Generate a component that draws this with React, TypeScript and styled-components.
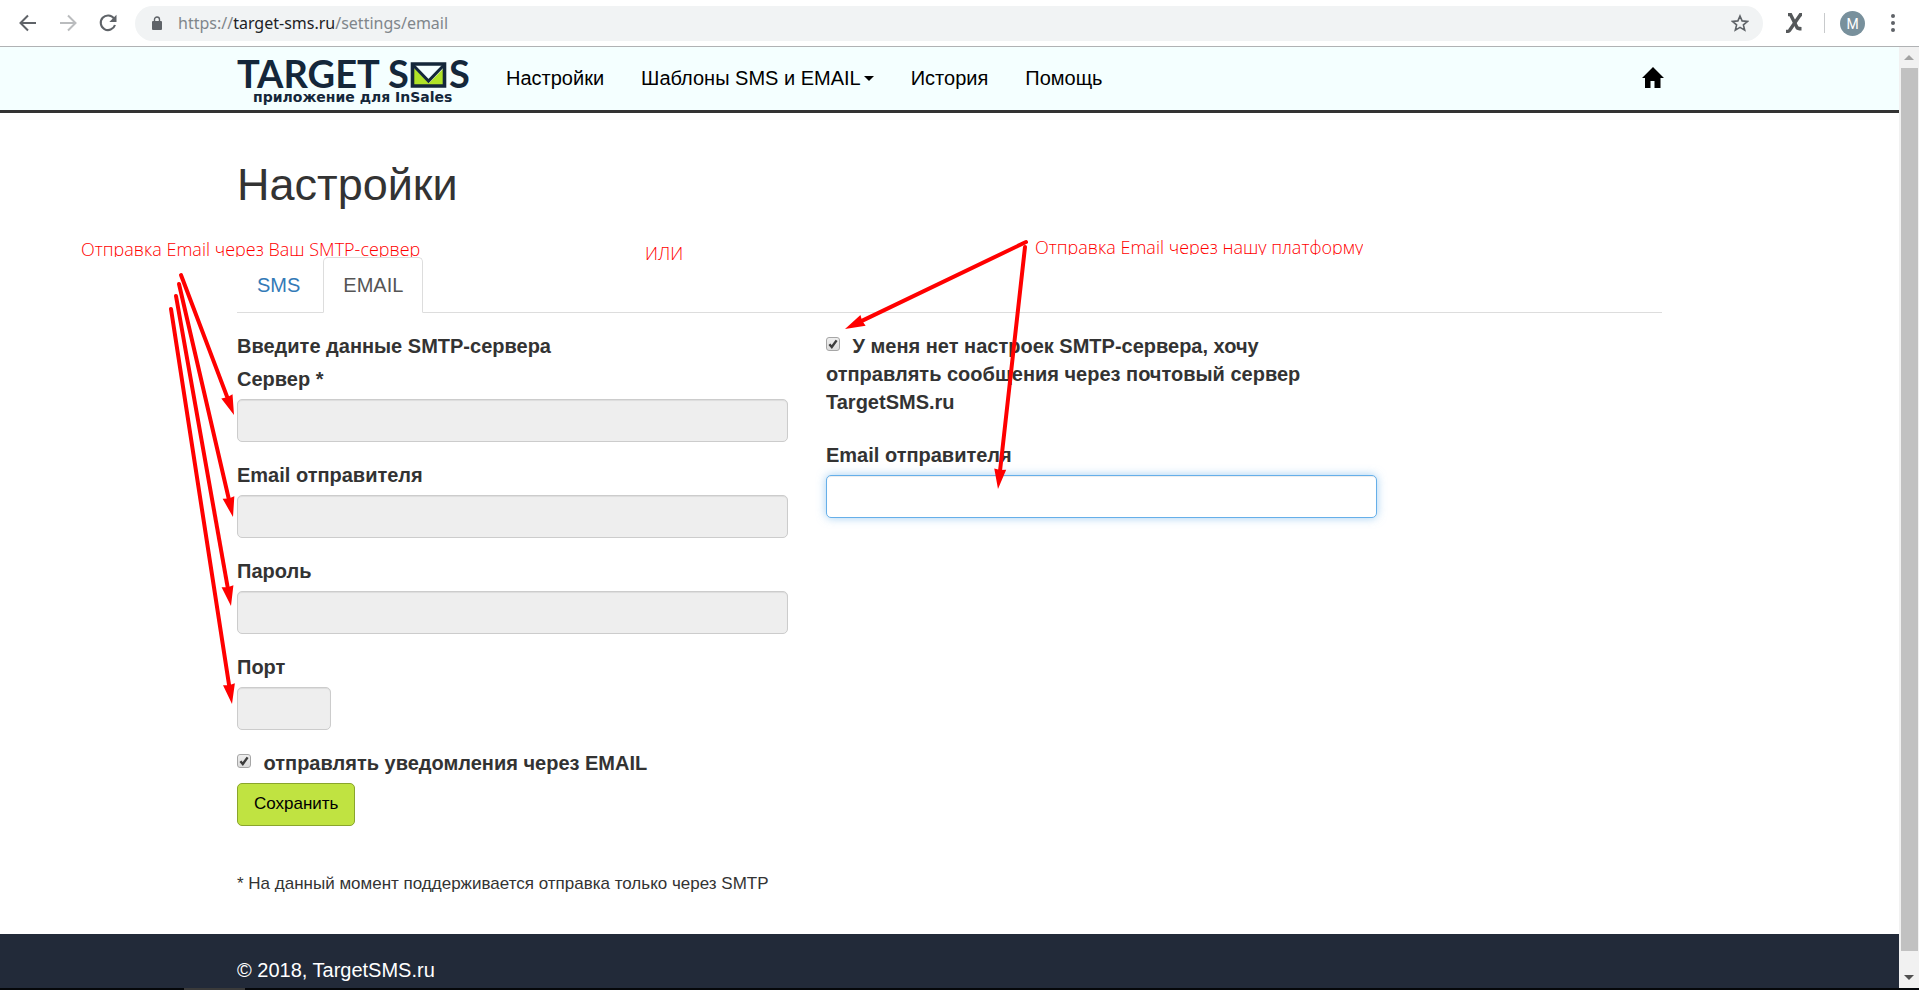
import React from "react";
import styled, { createGlobalStyle, css } from "styled-components";

const GlobalStyle = createGlobalStyle`
  *, *::before, *::after { box-sizing: border-box; }
  body {
    margin: 0;
    background: #fff;
    color: #333;
    font-family: "Liberation Sans", Arial, sans-serif;
    font-size: 20px;
    line-height: 28px;
  }
`;

const Browser = styled.div`
  display: flex;
  flex-direction: column;
  height: 100vh;
  overflow: hidden;
`;

const Toolbar = styled.div`
  display: flex;
  flex: none;
  align-items: center;
  height: 47px;
  padding: 0 24px 0 18px;
  border-bottom: 1px solid #b0b2b4;
  background: #fff;
`;

const ToolButtons = styled.div`
  display: flex;
  gap: 20px;
  padding-right: 17px;
`;

const ToolButton = styled.button`
  display: flex;
  align-items: center;
  justify-content: center;
  width: 20px;
  height: 20px;
  padding: 0;
  border: 0;
  background: none;
  color: #5f6368;
  &:disabled { color: #babcbe; }
`;

const AddressBar = styled.div`
  display: flex;
  flex: 1;
  align-items: center;
  height: 35px;
  padding: 0 14px 0 16px;
  border-radius: 18px;
  background: #f1f3f4;
  color: #80868b;
  font: 16px/24px "Noto Sans", sans-serif;
`;

const Url = styled.span`
  flex: 1;
  padding-left: 15px;
  b { color: #202124; font-weight: 400; }
`;

const ToolbarEnd = styled.div`
  display: flex;
  align-items: center;
  padding-left: 22px;
`;

const Extension = styled.span`
  display: flex;
  width: 18px;
  color: #55585a;
`;

const Divider = styled.span`
  width: 1px;
  height: 20px;
  margin: 0 15px 0 21px;
  background: #c8cacc;
`;

const Avatar = styled.span`
  width: 25px;
  height: 25px;
  margin-right: 26px;
  border-radius: 50%;
  background: #78909c;
  color: #fff;
  font: 14px/26px Roboto, sans-serif;
  text-align: center;
`;

const Viewport = styled.div`
  display: flex;
  flex: 1;
  min-height: 0;
`;

const Page = styled.div`
  display: flex;
  flex: 1;
  flex-direction: column;
  min-width: 0;
  overflow: hidden;
`;

const Scrollbar = styled.div`
  display: flex;
  flex: none;
  flex-direction: column;
  align-items: center;
  width: 20px;
  background: #f1f1f1;
`;

const ScrollArrow = styled.span<{ $down?: boolean }>`
  display: flex;
  flex: none;
  align-items: center;
  justify-content: center;
  height: 21px;
  &::before {
    content: "";
    border: 5px solid transparent;
    ${(p) =>
      p.$down
        ? css`border-top-color: #505050; border-bottom-width: 0;`
        : css`border-bottom-color: #a3a3a3; border-top-width: 0;`}
  }
`;

const ScrollThumb = styled.span`
  width: 17px;
  flex: 1;
  margin-bottom: 16px;
  background: #c1c1c1;
`;

const Container = styled.div`
  position: relative;
  width: 100%;
  max-width: 1463px;
  margin: 0 auto;
  padding: 0 19px;
`;

const NavBar = styled.header`
  flex: none;
  border-bottom: 3px solid #333;
  background: #f4ffff;
`;

const NavRow = styled(Container)`
  display: flex;
  align-items: center;
  height: 63px;
  padding-bottom: 1px;
`;

const Logo = styled.a`
  display: block;
  width: 232px;
  height: 54px;
  margin-right: 37px;
`;

const NavLinks = styled.nav`
  display: flex;
  flex: 1;
  gap: 37px;
`;

const NavLink = styled.a<{ $menu?: boolean }>`
  color: #000;
  text-decoration: none;
  ${(p) =>
    p.$menu &&
    css`
      display: flex;
      align-items: center;
      gap: 3px;
      &::after {
        content: "";
        border: 5px solid transparent;
        border-top-color: #000;
        border-bottom-width: 0;
      }
    `}
`;

const HomeLink = styled.a`
  display: block;
  height: 22px;
  margin-right: -2px;
  color: #000;
`;

const Title = styled.h1`
  margin: 0;
  padding: 47px 0;
  font-size: 45px;
  line-height: 50px;
  font-weight: 400;
`;

const Tabs = styled.div`
  display: flex;
  gap: 3px;
  border-bottom: 1px solid #ddd;
`;

const Tab = styled.a<{ $active?: boolean }>`
  height: 56px;
  margin-bottom: -1px;
  padding: 13px 19px;
  border: 1px solid transparent;
  border-radius: 5px 5px 0 0;
  color: #337ab7;
  text-decoration: none;
  ${(p) =>
    p.$active &&
    css`
      border-color: #ddd;
      border-bottom-color: #fff;
      background: #fff;
      color: #555;
    `}
`;

const Form = styled.form`
  display: grid;
  grid-template-columns: 551px 551px;
  gap: 38px;
  padding-top: 19px;
`;

const Column = styled.div`
  display: flex;
  flex-direction: column;
  align-items: flex-start;
`;

const Legend = styled.strong`
  margin-bottom: 5px;
`;

const Field = styled.label`
  display: flex;
  flex-direction: column;
  align-self: stretch;
  gap: 6px;
  margin-bottom: 19px;
  font-weight: 700;
`;

const TextInput = styled.input<{ $short?: boolean; $focused?: boolean }>`
  width: ${(p) => (p.$short ? "94px" : "100%")};
  height: 43px;
  padding: 7px 15px;
  border: 1px solid ${(p) => (p.$focused ? "#66afe9" : "#ccc")};
  border-radius: 5px;
  outline: 0;
  background: #fff;
  font: inherit;
  box-shadow: inset 0 1px 1px rgba(0, 0, 0, 0.075)
    ${(p) => p.$focused && ", 0 0 10px rgba(102, 175, 233, 0.6)"};
  &:disabled { background: #eee; }
`;

const CheckLabel = styled.label<{ $spaced?: boolean }>`
  margin-bottom: ${(p) => (p.$spaced ? "25px" : "6px")};
  font-weight: 700;
`;

const TickBox = styled.span`
  display: inline-block;
  position: relative;
  width: 14px;
  height: 14px;
  margin-right: 7px;
  vertical-align: 2px;
  input {
    display: block;
    width: 14px;
    height: 14px;
    margin: 0;
    appearance: none;
    border: 1px solid #a6a6a6;
    border-radius: 3px;
    background: linear-gradient(#eee, #dcdcdc);
  }
  svg {
    position: absolute;
    inset: 0;
    display: none;
    pointer-events: none;
  }
  input:checked + svg { display: block; }
`;

const SaveButton = styled.button`
  height: 43px;
  padding: 0 16px 2px;
  border: 1px solid #8aa52c;
  border-radius: 5px;
  background: #c0e341;
  color: #000;
  font: 17px/24px "Liberation Sans", Arial, sans-serif;
`;

const Note = styled.p`
  margin: 0;
  padding: 46px 0 38px;
  font-size: 17px;
  line-height: 24px;
`;

const Footer = styled.footer`
  flex: 1;
  padding-top: 22px;
  background: #222a39;
  color: #fff;
`;

const Taskbar = styled.div`
  flex: none;
  height: 2px;
  padding-left: 184px;
  background: #05070a;
  &::before {
    content: "";
    display: block;
    width: 61px;
    height: 2px;
    background: #3a3a3a;
  }
`;

const Arrows = styled.svg`
  position: absolute;
  top: 0;
  left: 0;
  overflow: visible;
  pointer-events: none;
`;

const Remark = styled.span<{ $x: number; $y: number }>`
  position: absolute;
  left: ${(p) => p.$x}px;
  top: ${(p) => p.$y}px;
  height: 17px;
  overflow: hidden;
  color: #f00;
  font: 300 18px/18px "Open Sans", sans-serif;
  white-space: nowrap;
`;

function Check({ id, children, spaced }: { id: string; children: React.ReactNode; spaced?: boolean }) {
  return (
    <CheckLabel htmlFor={id} $spaced={spaced}>
      <TickBox>
        <input id={id} type="checkbox" defaultChecked />
        <svg width="14" height="14" viewBox="0 0 14 14">
          <path d="M3.4 7.2 5.8 10 10.6 3.4" fill="none" stroke="#3c3c3c" strokeWidth="2.4" />
        </svg>
      </TickBox>{" "}
      {children}
    </CheckLabel>
  );
}

const arrowLines = [
  [-37, 162, 16, 302],
  [-39, 171, 15, 404],
  [-42, 183, 13, 493],
  [-47, 196, 14, 591],
  [808, 129, 627, 216],
  [807, 134, 780, 376],
];

function Arrow({ line }: { line: number[] }) {
  const [x1, y1, x2, y2] = line;
  const length = Math.hypot(x2 - x1, y2 - y1);
  const angle = (Math.atan2(y2 - y1, x2 - x1) * 180) / Math.PI;
  return (
    <g transform={`translate(${x1} ${y1}) rotate(${angle})`} fill="#f00" stroke="#f00">
      <path d={`M0 0H${length - 17}`} strokeWidth="4" strokeLinecap="round" />
      <path d={`M${length} 0l-20 -6 1 6 -1 6z`} stroke="none" />
    </g>
  );
}

export default function App() {
  return (
    <Browser>
      <GlobalStyle />
      <Toolbar>
        <ToolButtons>
          <ToolButton aria-label="Назад">
            <svg width="20" height="20" viewBox="0 0 20 20" fill="none" stroke="currentColor" strokeWidth="2">
              <path d="M18 10H3M10 2.500 2.500 10l7.500 7.500" />
            </svg>
          </ToolButton>
          <ToolButton aria-label="Вперёд" disabled>
            <svg width="20" height="20" viewBox="0 0 20 20" fill="none" stroke="currentColor" strokeWidth="2">
              <path d="M2 10h15M10 2.500 17.500 10 10 17.500" />
            </svg>
          </ToolButton>
          <ToolButton aria-label="Обновить">
            <svg width="20" height="20" viewBox="0 0 20 20">
              <path d="M16 5.500A7.300 7.300 0 1 0 17 12" fill="none" stroke="currentColor" strokeWidth="2.100" />
              <path d="M18.500 1.800V9H11.300z" fill="currentColor" />
            </svg>
          </ToolButton>
        </ToolButtons>
        <AddressBar>
          <svg width="12" height="15" viewBox="0 0 12 15">
            <rect x="1" y="5" width="10" height="9" rx="1" fill="#5f6368" />
            <path d="M3.500 6V3.500a2.500 2.500 0 0 1 5 0V6" fill="none" stroke="#5f6368" strokeWidth="1.400" />
          </svg>
          <Url>https://<b>target-sms.ru</b>/settings/email</Url>
          <svg width="18" height="18" viewBox="0 0 18 18" fill="none" stroke="#5f6368" strokeWidth="1.600">
            <path d="M9 2l2.100 4.900 5.400.5-4.100 3.500 1.300 5.300L9 13.400l-4.700 2.800 1.300-5.300L1.500 7.400l5.400-.5z" />
          </svg>
        </AddressBar>
        <ToolbarEnd>
          <Extension>
            <svg width="18" height="20" viewBox="0 0 18 20" fill="none" stroke="currentColor" strokeWidth="3.400">
              <path d="M3 1.500h2.500L12 14.500q.8 1.300 4.500 1.300" />
              <path d="M17 1.500h-1.500L4.500 17.500q-.8 1-3.500 1" />
            </svg>
          </Extension>
          <Divider />
          <Avatar>M</Avatar>
          <svg width="4" height="18" viewBox="0 0 4 18" fill="#5f6368">
            <circle cx="2" cy="2" r="2" />
            <circle cx="2" cy="9" r="2" />
            <circle cx="2" cy="16" r="2" />
          </svg>
        </ToolbarEnd>
      </Toolbar>

      <Viewport>
        <Page>
          <NavBar>
            <NavRow>
              <Logo href="#" aria-label="TargetSMS">
                <svg width="232" height="54" viewBox="0 0 232 54" fill="#14273a">
                  <g fontFamily="Lato" fontWeight="700" fontSize="38">
                    <text x="0" y="37">TARGET</text>
                    <text x="151" y="37">S</text>
                    <text x="212" y="37">S</text>
                  </g>
                  <path d="M175 15l17 17 17-17v20h-34z" fill="#b0e327" />
                  <path d="M175.500 13h32v22h-32z" fill="none" stroke="#14273a" strokeWidth="3.600" />
                  <path d="M176 14l15.500 16L207 14" fill="none" stroke="#14273a" strokeWidth="3" />
                  <text x="16" y="51" fontFamily="DejaVu Sans" fontWeight="700" fontSize="14">
                    приложение для InSales
                  </text>
                </svg>
              </Logo>
              <NavLinks>
                <NavLink href="#">Настройки</NavLink>
                <NavLink href="#" $menu>Шаблоны SMS и EMAIL</NavLink>
                <NavLink href="#">История</NavLink>
                <NavLink href="#">Помощь</NavLink>
              </NavLinks>
              <HomeLink href="#" aria-label="Главная">
                <svg width="22" height="22" viewBox="0 0 22 22" fill="currentColor">
                  <path d="M11 0 0 11h3v10h5.500v-7h4v7H18.500V11H22z" />
                </svg>
              </HomeLink>
            </NavRow>
          </NavBar>

          <Container as="main">
            <Title>Настройки</Title>
            <Tabs>
              <Tab href="#">SMS</Tab>
              <Tab href="#" $active>EMAIL</Tab>
            </Tabs>
            <Form>
              <Column>
                <Legend>Введите данные SMTP-сервера</Legend>
                <Field>Сервер *<TextInput disabled /></Field>
                <Field>Email отправителя<TextInput disabled /></Field>
                <Field>Пароль<TextInput disabled /></Field>
                <Field>Порт<TextInput disabled $short /></Field>
                <Check id="notify">отправлять уведомления через EMAIL</Check>
                <SaveButton type="button">Сохранить</SaveButton>
              </Column>
              <Column>
                <Check id="no-smtp" spaced>
                  У меня нет настроек SMTP-сервера, хочу отправлять сообщения через почтовый сервер TargetSMS.ru
                </Check>
                <Field>Email отправителя<TextInput type="email" $focused /></Field>
              </Column>
            </Form>
            <Note>* На данный момент поддерживается отправка только через SMTP</Note>

            <Arrows width="1" height="1">
              {arrowLines.map((line, i) => <Arrow key={i} line={line} />)}
            </Arrows>
            <Remark $x={-137} $y={127}>Отправка Email через Ваш SMTP-сервер</Remark>
            <Remark $x={427} $y={131}>ИЛИ</Remark>
            <Remark $x={817} $y={125}>Отправка Email через нашу платформу</Remark>
          </Container>

          <Footer>
            <Container>© 2018, TargetSMS.ru</Container>
          </Footer>
        </Page>
        <Scrollbar>
          <ScrollArrow />
          <ScrollThumb />
          <ScrollArrow $down />
        </Scrollbar>
      </Viewport>
      <Taskbar />
    </Browser>
  );
}
